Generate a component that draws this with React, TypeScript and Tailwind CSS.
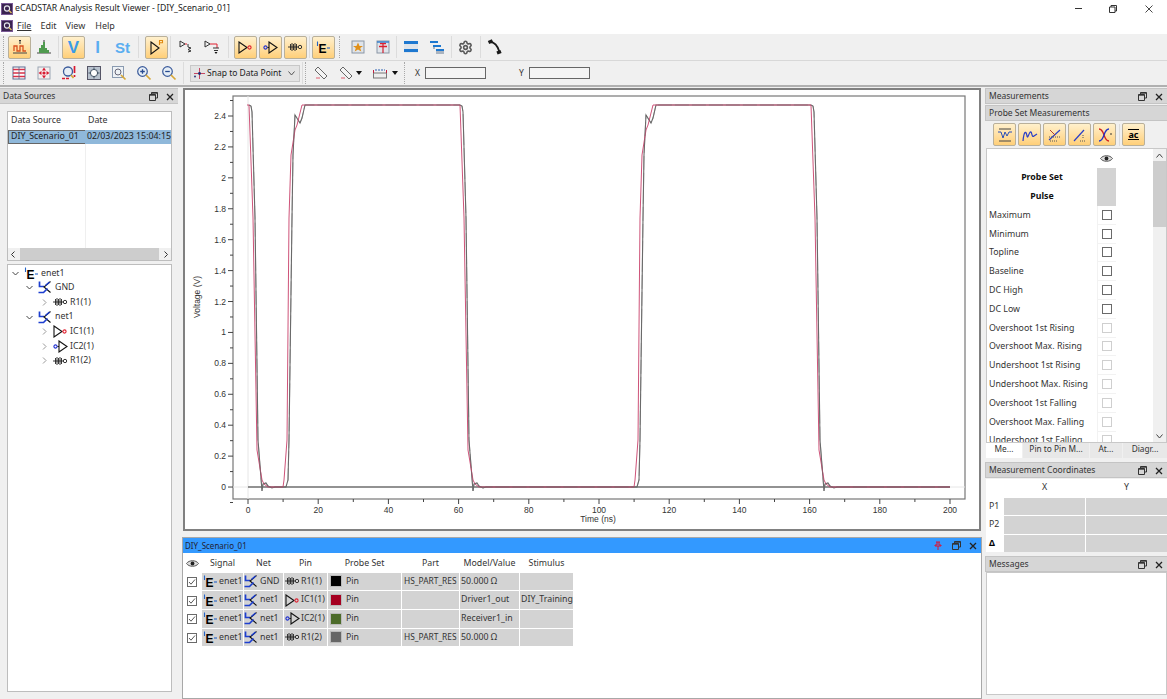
import React from "react";
import { Settings } from "lucide-react";

const F = "font-['Noto_Sans','Open_Sans',sans-serif]";

function S({ children, w = 16, h = 16, vb = "0 0 16 16" }: { children: React.ReactNode; w?: number; h?: number; vb?: string }) {
  return (
    <svg width={w} height={h} viewBox={vb} fill="none" className="shrink-0">
      {children}
    </svg>
  );
}

const EIcon = () => (
  <S w={15} h={13} vb="0 0 15 13">
    <path d="M1.5 0.5V5" stroke="#2563c8" strokeWidth="1.1" />
    <text x="2.5" y="11.5" fontSize="12" fontWeight="800" fill="#000" fontFamily="'Liberation Sans',sans-serif">E</text>
    <path d="M11 7H14" stroke="#2563c8" strokeWidth="1.1" />
  </S>
);
const NetIcon = () => (
  <S w={15} h={13} vb="0 0 15 13">
    <path d="M1.5 0.5V5.5H6" stroke="#1d3fd0" strokeWidth="1.7" />
    <path d="M12.5 0.5L6 6L12.5 11.5" stroke="#111" strokeWidth="1.1" />
    <path d="M0.5 11.5H5.5L9.5 7.5" stroke="#1d3fd0" strokeWidth="1.7" />
    <path d="M7.5 4.5L11.5 1" stroke="#1d3fd0" strokeWidth="1.5" />
  </S>
);
const ResIcon = () => (
  <S w={15} h={10} vb="0 0 15 10">
    <path d="M0 5H2M2.5 2V8M4 1V9M5.5 2V8M7 1V9M8.5 2V8M2 5H10" stroke="#222" strokeWidth="0.9" />
    <circle cx="12" cy="5" r="1.7" stroke="#333" strokeWidth="1" />
  </S>
);
const DrvIcon = () => (
  <S w={15} h={13} vb="0 0 15 13">
    <path d="M1 1L9 6.5L1 12Z" stroke="#111" strokeWidth="1.1" />
    <circle cx="11.5" cy="6.5" r="1.6" stroke="#e02030" strokeWidth="1.1" />
  </S>
);
const RcvIcon = () => (
  <S w={15} h={13} vb="0 0 15 13">
    <circle cx="2.5" cy="6.5" r="1.6" stroke="#2030d0" strokeWidth="1.1" />
    <path d="M4.5 6.5H6M6 1L14 6.5L6 12Z" stroke="#111" strokeWidth="1.1" />
  </S>
);
const Check = ({ on = false, faint = false }: { on?: boolean; faint?: boolean }) => (
  <div className={`w-[10px] h-[10px] border ${faint ? "border-[#cfcfcf]" : "border-[#6a6a6a]"} bg-white flex items-center justify-center`}>
    {on && (
      <S w={8} h={8} vb="0 0 8 8">
        <path d="M1 4L3 6.2L7 1.5" stroke="#444" strokeWidth="0.9" />
      </S>
    )}
  </div>
);
const Eye = () => (
  <S w={13} h={9} vb="0 0 13 9">
    <path d="M0.5 4.5C3 0.8 10 0.8 12.5 4.5C10 8.2 3 8.2 0.5 4.5Z" stroke="#555" fill="#ddd" />
    <circle cx="6.5" cy="4.5" r="1.9" fill="#222" />
  </S>
);
const RestoreX = ({ pin = false }: { pin?: boolean }) => (
  <div className="flex items-center">
    {pin && (
      <span className="mr-[10px]">
        <S w={8} h={9} vb="0 0 8 9">
          <path d="M2 1H6M3 1V4H1V5H7V4H5V1M4 5V9" stroke="#e01030" strokeWidth="1" />
        </S>
      </span>
    )}
    <S w={9} h={9} vb="0 0 9 9">
      <path d="M2.5 2.5V0.5H8.5V6H6.5M0.5 2.5H6.5V8.5H0.5Z" stroke="#333" strokeWidth="1" />
      <path d="M0.5 3.2H6.5M2.5 1.2H8.5" stroke="#333" strokeWidth="1" />
    </S>
    <span className="ml-[8px]">
      <S w={8} h={8} vb="0 0 8 8">
        <path d="M1 1L7 7M7 1L1 7" stroke="#222" strokeWidth="1.3" />
      </S>
    </span>
  </div>
);
const DockHead = ({ title, className = "", pin = false }: { title: string; className?: string; pin?: boolean }) => (
  <div className={`flex items-center justify-between pl-[3px] pr-[4px] pt-[1px] text-[8.5px] text-[#333] bg-[#d6d6d6] border-y border-[#c4c4c4] ${className}`}>
    <span>{title}</span>
    <RestoreX pin={pin} />
  </div>
);
const Btn = ({ children, on = false, className = "" }: { children: React.ReactNode; on?: boolean; className?: string }) => (
  <div className={`w-[23px] h-[23px] shrink-0 flex items-center justify-center rounded-[2px] ${on ? "border border-[#b9b09a] bg-gradient-to-b from-[#fff0cc] to-[#ffcf78]" : ""} ${className}`}>
    {children}
  </div>
);
const Sep = ({ className = "" }: { className?: string }) => <div className={`w-px h-[22px] bg-[#dcdcdc] shrink-0 ${className}`} />;
const Grip = ({ className = "" }: { className?: string }) => <div className={`w-px h-[22px] border-l border-dotted border-[#a8a8a8] shrink-0 ${className}`} />;
const Arrow = () => (
  <S w={6} h={4} vb="0 0 6 4">
    <path d="M0 0H6L3 4Z" fill="#111" />
  </S>
);

const Doc = ({ children }: { children: React.ReactNode }) => (
  <S>
    <rect x="2" y="2" width="12" height="12" fill="#dfe4ea" stroke="#8a96a5" />
    {children}
  </S>
);

type P = number[][];
const falls = (x: number): P =>
  [[x - 1, 105], [x + 1, 105], [x + 5, 218], [x + 9, 450], [x + 14, 480], [x + 16, 484], [x + 20, 487]];
const rises = (x: number): P =>
  [[x, 487], [x + 1, 480], [x + 4, 440], [x + 6, 218], [x + 8, 155], [x + 12, 130], [x + 14, 125], [x + 17, 113], [x + 19, 105]];
const gfalls = (x: number): P =>
  [[x + 1, 105], [x + 3, 106], [x + 4, 112], [x + 7, 218], [x + 10, 440], [x + 14, 491], [x + 15, 484], [x + 18, 483], [x + 20, 486], [x + 24, 488], [x + 27, 487]];
const grises = (x: number): P =>
  [[x + 3, 487], [x + 5, 480], [x + 6, 440], [x + 9, 218], [x + 10, 155], [x + 12, 115], [x + 17, 123], [x + 19, 118], [x + 22, 105]];
const poly = (f: (x: number) => P, r: (x: number) => P) =>
  [...f(248), ...r(283), ...f(459), ...r(634), ...f(810), [950, 487]].map((p) => p.join(",")).join(" ");

const yTicks = ["2.4", "2.2", "2", "1.8", "1.6", "1.4", "1.2", "1", "0.8", "0.6", "0.4", "0.2", "0"];
const xTicks = [0, 20, 40, 60, 80, 100, 120, 140, 160, 180, 200];

function Plot() {
  // svg coordinates are offset so the numbers read as page pixels
  const ox = 185;
  const oy = 90;
  return (
    <svg width="795" height="439" viewBox={`${ox} ${oy} 795 439`} className="block">
      <rect x="233" y="96" width="732" height="403" fill="#fff" stroke="#777" strokeWidth="1.2" />
      <path d="M248 96V499M233 487H965" stroke="#e6e6e6" />
      {yTicks.map((t, i) => {
        const y = 116 + i * 30.92;
        return (
          <g key={t}>
            <path d={`M228 ${y}H233`} stroke="#444" />
            <path d={`M230 ${y + 15.46}H233`} stroke="#444" />
            <text x="226" y={y + 3} textAnchor="end" fontSize="8.5" fill="#333" fontFamily="'Liberation Sans',sans-serif">{t}</text>
          </g>
        );
      })}
      <path d="M230 100.5H233" stroke="#444" />
      {xTicks.map((t, i) => {
        const x = 248 + i * 70.2;
        return (
          <g key={t}>
            <path d={`M${x} 499V504`} stroke="#444" />
            {i < 10 && <path d={`M${x + 35.1} 499V502`} stroke="#444" />}
            <text x={x} y="513" textAnchor="middle" fontSize="8.5" fill="#333" fontFamily="'Liberation Sans',sans-serif">{t}</text>
          </g>
        );
      })}
      <text x="598" y="522" textAnchor="middle" fontSize="8.5" fill="#333" fontFamily="'Liberation Sans',sans-serif">Time (ns)</text>
      <text transform="translate(200 297) rotate(-90)" textAnchor="middle" fontSize="8.5" fill="#333" fontFamily="'Liberation Sans',sans-serif">Voltage (V)</text>
      <path d="M248 487H950" stroke="#333" strokeWidth="1.1" />
      <polyline points={poly(gfalls, grises)} fill="none" stroke="#6a6a6a" strokeWidth="1.1" />
      <polyline points={poly(falls, rises)} fill="none" stroke="#c8406a" strokeWidth="0.9" />
      <polyline points={poly(gfalls, grises)} fill="none" stroke="#6a6a6a" strokeWidth="0.5" strokeDasharray="14 3" />
    </svg>
  );
}

const rows = [
  { net: "GND", pin: "R1(1)", icon: <ResIcon />, color: "bg-black", part: "HS_PART_RES", model: "50.000 Ω", stim: "" },
  { net: "net1", pin: "IC1(1)", icon: <DrvIcon />, color: "bg-[#a50021]", part: "", model: "Driver1_out", stim: "DIY_Training" },
  { net: "net1", pin: "IC2(1)", icon: <RcvIcon />, color: "bg-[#4c6b2a]", part: "", model: "Receiver1_in", stim: "" },
  { net: "net1", pin: "R1(2)", icon: <ResIcon />, color: "bg-[#666666]", part: "HS_PART_RES", model: "50.000 Ω", stim: "" },
];

const meas = [
  ["Maximum", 0], ["Minimum", 0], ["Topline", 0], ["Baseline", 0], ["DC High", 0], ["DC Low", 0],
  ["Overshoot 1st Rising", 1], ["Overshoot Max. Rising", 1], ["Undershoot 1st Rising", 1], ["Undershoot Max. Rising", 1],
  ["Overshoot 1st Falling", 1], ["Overshoot Max. Falling", 1], ["Undershoot 1st Falling", 1],
] as const;

const Tree = ({ ind, chev, icon, label }: { ind: string; chev: string; icon: React.ReactNode; label: string }) => (
  <div className={`h-[14.6px] flex items-center ${ind}`}>
    <span className="w-[12px] flex justify-center">
      <S w={7} h={7} vb="0 0 7 7">
        {chev === "d" ? <path d="M0.5 2L3.5 5L6.5 2" stroke="#444" /> : <path d="M2 0.5L5 3.5L2 6.5" stroke="#999" />}
      </S>
    </span>
    <span className="ml-[3px] w-[15px] flex justify-center">{icon}</span>
    <span className="ml-[2px]">{label}</span>
  </div>
);

const Logo = () => (
  <S w={12} h={12} vb="0 0 12 12">
    <rect width="12" height="12" fill="#3a2450" />
    <rect x="0.5" y="0.5" width="11" height="11" stroke="#7a5a96" />
    <circle cx="6" cy="5.5" r="2.6" stroke="#e8e8ee" strokeWidth="1.1" />
    <path d="M8 7.5L10.5 10" stroke="#e8c060" strokeWidth="1.3" />
  </S>
);

export default function App() {
  return (
    <div className={`w-[1167px] h-[699px] bg-[#f0f0f0] overflow-hidden text-[9px] text-[#333] ${F}`}>
      {/* title */}
      <div className="h-[17px] bg-white flex items-center text-[8.7px] text-[#222]">
        <span className="ml-[1px]"><Logo /></span>
        <span className="ml-[2px]">eCADSTAR Analysis Result Viewer - [DIY_Scenario_01]</span>
        <div className="ml-auto flex items-center">
          <div className="w-[7px] h-px bg-[#333] mr-[27px]" />
          <span className="mr-[28px]">
            <S w={8} h={8} vb="0 0 8 8">
              <path d="M2 2V0.5H7.5V6H6M0.5 2H6V7.5H0.5Z" stroke="#333" strokeWidth="1" />
            </S>
          </span>
          <span className="mr-[14px]">
            <S w={8} h={8} vb="0 0 8 8">
              <path d="M0.5 0.5L7.5 7.5M7.5 0.5L0.5 7.5" stroke="#333" strokeWidth="0.9" />
            </S>
          </span>
        </div>
      </div>
      {/* menu */}
      <div className="h-[17px] bg-white flex items-center">
        <span className="ml-[1px]"><Logo /></span>
        <span className="ml-[4px] underline decoration-[0.5px] underline-offset-1">File</span>
        <span className="ml-[9px]">Edit</span>
        <span className="ml-[9px]">View</span>
        <span className="ml-[10px]">Help</span>
      </div>
      {/* toolbar 1 */}
      <div className="h-[27px] flex items-center border-b border-[#d8d8d8]">
        <Grip className="ml-[3px]" />
        <Btn on className="ml-[4px]">
          <S>
            <path d="M1 14H15" stroke="#444" />
            <path d="M2 12V7H5V12H8V7H11V12H14" stroke="#d9501e" strokeWidth="1.3" />
            <path d="M7 1.5H9M8 1.5V5" stroke="#333" />
          </S>
        </Btn>
        <Btn className="ml-px">
          <S>
            <path d="M1 14H15" stroke="#444" />
            <path d="M3 14V9H5V6H7V3H9V9H11V11H13V14Z" fill="#4f9a4f" />
            <path d="M8 1V3" stroke="#333" />
          </S>
        </Btn>
        <Sep className="ml-[3px] mr-[3px]" />
        <Btn on><span className="text-[17px] font-bold text-[#3a9be8] font-['Liberation_Sans',sans-serif] leading-none">V</span></Btn>
        <Btn className="ml-px"><span className="text-[17px] font-bold text-[#5aaef0] font-['Liberation_Sans',sans-serif] leading-none">I</span></Btn>
        <Btn className="ml-[2px]"><span className="text-[15px] font-bold text-[#5aaef0] font-['Liberation_Sans',sans-serif] leading-none">St</span></Btn>
        <Sep className="ml-[4px] mr-[6px]" />
        <Btn on>
          <S>
            <path d="M2 3L10 9L2 15Z" stroke="#111" strokeWidth="1.1" />
            <path d="M10.5 6V1.5H13.5V3.8H10.5" stroke="#e08a10" strokeWidth="1.1" />
          </S>
        </Btn>
        <Sep className="ml-[2px] mr-[2px]" />
        <Btn className="ml-[2px]">
          <S>
            <path d="M1 2L6 5L1 8Z" stroke="#333" />
            <path d="M6 5H8" stroke="#e02030" />
            <path d="M9 5V8L12 9L9 10.5L12 12L9 13" stroke="#333" />
          </S>
        </Btn>
        <Btn className="ml-[2px]">
          <S>
            <path d="M1 2L6 5L1 8Z" stroke="#333" />
            <path d="M6 5H13V9" stroke="#e02030" />
            <path d="M9 9H15M10 11.5H14" stroke="#333" />
            <path d="M10.5 13H13.5L12 15Z" fill="#111" />
          </S>
        </Btn>
        <Sep className="ml-[5px] mr-[5px]" />
        <Btn on><DrvIcon /></Btn>
        <Btn on className="ml-[2px]"><RcvIcon /></Btn>
        <Btn on className="ml-[2px]"><ResIcon /></Btn>
        <Sep className="ml-[2px] mr-[2px]" />
        <Btn on><EIcon /></Btn>
        <Grip className="ml-[4px]" />
        <Btn className="ml-[6px]">
          <Doc><path d="M8 3.5L9.5 7H13L10.2 9L11.3 12.5L8 10.5L4.7 12.5L5.8 9L3 7H6.5Z" fill="#e0901a" /></Doc>
        </Btn>
        <Btn className="ml-[2px]">
          <Doc>
            <path d="M5 4.5H11M4 7.5H12" stroke="#e02030" strokeWidth="1.6" />
            <path d="M8 5V14" stroke="#d02030" strokeWidth="1.2" />
            <path d="M2 3H14" stroke="#2f7fd0" strokeWidth="1.4" />
          </Doc>
        </Btn>
        <Sep className="ml-[2px] mr-[2px]" />
        <Btn>
          <S>
            <rect x="1" y="2" width="14" height="12" fill="#dfe4ea" />
            <path d="M1 3.5H15M1 11.5H15" stroke="#1e78d0" strokeWidth="3" />
          </S>
        </Btn>
        <Btn className="ml-[3px]">
          <S>
            <path d="M1 2H9V4H1ZM4 6H12V8H4ZM7 10H15V12H7Z" fill="#1e78d0" />
            <path d="M7 12H15V15H7ZM4 8H6V10H4Z" fill="#aab4c0" />
          </S>
        </Btn>
        <Sep className="ml-[3px] mr-[2px]" />
        <Btn><Settings size={15} strokeWidth={2.6} color="#5a5a5a" /></Btn>
        <Sep className="ml-[3px] mr-[2px]" />
        <Btn>
          <S>
            <path d="M3 3C8 3 11 8 12.5 13" stroke="#1a1a1a" strokeWidth="1.8" />
            <path d="M1.5 3.5L5.5 1.8M10 14L14 12.5" stroke="#1a1a1a" strokeWidth="3.4" />
          </S>
        </Btn>
      </div>
      {/* toolbar 2 */}
      <div className="h-[26px] flex items-center border-b-2 border-[#b0b0b0]">
        <Grip className="ml-[3px]" />
        {[0, 1, 2, 3, 4, 5, 6].map((i) => (
          <Btn key={i} className={i === 0 ? "ml-[3px] mr-[2px]" : "mr-[2px]"}>
            {i === 0 && (
              <S>
                <rect x="2" y="2" width="12" height="12" fill="#fff" stroke="#5a6a90" />
                <path d="M2 4.5H14M2 8H14M2 11.5H14" stroke="#d8324a" strokeWidth="1.7" />
                <path d="M8 2V14" stroke="#5a6a90" strokeWidth="0.8" />
              </S>
            )}
            {i === 1 && (
              <S>
                <rect x="2" y="2" width="12" height="12" fill="#f5eeee" stroke="#9aa6b4" />
                <circle cx="8" cy="8" r="1.6" fill="#d81830" />
                <path d="M8 2.5L10 5.5H6ZM8 13.5L10 10.5H6ZM2.5 8L5.5 6V10ZM13.5 8L10.5 6V10Z" fill="#d81830" />
              </S>
            )}
            {i === 2 && (
              <S>
                <circle cx="7" cy="6.5" r="4.5" fill="#e6eef6" stroke="#3a5a9a" strokeWidth="1.3" />
                <path d="M1 13.5H9" stroke="#d81830" strokeWidth="1.7" strokeDasharray="3 1" />
                <path d="M13.5 1V8M13.5 10V12" stroke="#d81830" strokeWidth="1.7" />
                <path d="M10 10L12.5 13" stroke="#d8a838" strokeWidth="1.7" />
              </S>
            )}
            {i === 3 && (
              <S>
                <rect x="1.5" y="1.5" width="13" height="13" fill="#b8c2ce" stroke="#556" />
                <circle cx="8" cy="8" r="3.6" fill="#fff" stroke="#456" />
                <path d="M8 2.5V5M8 11V13.5M2.5 8H5M11 8H13.5" stroke="#456" />
              </S>
            )}
            {i === 4 && (
              <S>
                <rect x="1.5" y="1.5" width="11" height="11" fill="#eef2f6" stroke="#8a9ab0" />
                <circle cx="7" cy="7" r="3" stroke="#667" />
                <path d="M10 10L14.5 14.5" stroke="#d8a838" strokeWidth="1.7" />
              </S>
            )}
            {(i === 5 || i === 6) && (
              <S>
                <circle cx="6.5" cy="6.5" r="4.8" fill="#e6eef6" stroke="#3a5a9a" strokeWidth="1.2" />
                <path d={i === 5 ? "M4.2 6.5H8.8M6.5 4.2V8.8" : "M4.2 6.5H8.8"} stroke="#274a90" strokeWidth="1.3" />
                <path d="M10 10L14.5 14.5" stroke="#d8a838" strokeWidth="1.7" />
              </S>
            )}
          </Btn>
        ))}
        <Sep className="ml-[1px] mr-[6px]" />
        <div className="w-[110px] h-[17px] bg-[#e4e4e4] border border-[#c8c8c8] flex items-center text-[8.5px] text-[#222]">
          <span className="ml-[2px]">
            <S w={13} h={13} vb="0 0 13 13">
              <path d="M6.5 1V12M1 6.5H12" stroke="#c02040" strokeWidth="0.8" />
              <circle cx="6.5" cy="6.5" r="1.4" fill="#1d2a70" />
              <circle cx="2" cy="9.5" r="0.9" fill="#1d2a70" />
            </S>
          </span>
          <span className="ml-[1px]">Snap to Data Point</span>
          <span className="ml-auto mr-[4px]">
            <S w={7} h={5} vb="0 0 7 5"><path d="M0.5 0.5L3.5 4L6.5 0.5" stroke="#555" /></S>
          </span>
        </div>
        <Sep className="ml-[2px]" />
        <Grip className="ml-[2px]" />
        <Btn className="ml-[3px]">
          <S><path d="M2 5L5 2L14 11L11 14Z" fill="#f4f4f4" stroke="#666" /><path d="M3 13H7" stroke="#e06070" /></S>
        </Btn>
        <Btn className="ml-[2px]">
          <S><path d="M2 5L5 2L14 11L11 14Z" fill="#f4f4f4" stroke="#666" /><path d="M3 13H7" stroke="#e06070" /></S>
        </Btn>
        <span className="ml-[-1px]"><Arrow /></span>
        <Btn className="ml-[6px]">
          <S>
            <path d="M3 5H13" stroke="#2a5fb0" strokeDasharray="2 1" />
            <rect x="1.5" y="8" width="13" height="5" fill="#eee" stroke="#777" />
            <path d="M1.5 5V8M14.5 5V8" stroke="#c02040" />
          </S>
        </Btn>
        <span className="ml-[1px]"><Arrow /></span>
        <Grip className="ml-[6px]" />
        <span className="ml-[10px] text-[8.5px]">X</span>
        <div className="ml-[5px] w-[61px] h-[12px] bg-[#f4f4f4] border border-[#666]" />
        <span className="ml-[33px] text-[8.5px]">Y</span>
        <div className="ml-[5px] w-[61px] h-[12px] bg-[#f4f4f4] border border-[#666]" />
      </div>
      {/* body */}
      <div className="flex h-[612px]">
        {/* left */}
        <div className="w-[178px] shrink-0 flex flex-col">
          <DockHead title="Data Sources" className="h-[16px] mt-[1px]" />
          <div className="mt-[7px] mx-[7px] w-[165px] h-[150px] bg-white border border-[#bdbdbd] flex flex-col shrink-0 text-[8.8px]">
            <div className="h-[18px] flex items-center">
              <span className="w-[78px] pl-[3px]">Data Source</span>
              <span className="pl-[2px]">Date</span>
            </div>
            <div className="h-[14px] bg-[#8fb8da] flex items-center text-[#222]">
              <span className="w-[78px] h-full flex items-center pl-[2px] border-y border-l border-[#666]">DIY_Scenario_01</span>
              <span className="pl-[2px] whitespace-nowrap">02/03/2023 15:04:15</span>
            </div>
            <div className="flex-1 flex">
              <div className="w-[78px] border-r border-[#efefef]" />
            </div>
            <div className="h-[12px] bg-[#f0f0f0] flex items-center justify-between px-[2px]">
              <S w={6} h={7} vb="0 0 6 7"><path d="M4.5 0.5L1.5 3.5L4.5 6.5" stroke="#333" /></S>
              <div className="flex-1 h-full bg-[#cdcdcd] mx-[4px]" />
              <S w={6} h={7} vb="0 0 6 7"><path d="M1.5 0.5L4.5 3.5L1.5 6.5" stroke="#333" /></S>
            </div>
          </div>
          <div className="mt-[3px] mx-[7px] w-[165px] h-[428px] bg-white border border-[#bdbdbd] pt-[1px] text-[8.8px] shrink-0">
            <Tree ind="pl-[1px]" chev="d" icon={<EIcon />} label="enet1" />
            <Tree ind="pl-[15px]" chev="d" icon={<NetIcon />} label="GND" />
            <Tree ind="pl-[30px]" chev="r" icon={<ResIcon />} label="R1(1)" />
            <Tree ind="pl-[15px]" chev="d" icon={<NetIcon />} label="net1" />
            <Tree ind="pl-[30px]" chev="r" icon={<DrvIcon />} label="IC1(1)" />
            <Tree ind="pl-[30px]" chev="r" icon={<RcvIcon />} label="IC2(1)" />
            <Tree ind="pl-[30px]" chev="r" icon={<ResIcon />} label="R1(2)" />
          </div>
        </div>
        {/* center */}
        <div className="w-[800px] ml-[4px] shrink-0 flex flex-col">
          <div className="mt-[1px] mx-[1px] h-[443px] border-2 border-[#808080] bg-white shrink-0">
            <Plot />
          </div>
          <div className="mt-[6px] flex-1 bg-white border border-[#a8a8a8] flex flex-col">
            <div className="h-[15px] bg-[#3399ff] flex items-center justify-between pl-[2px] pr-[4px] text-[8px] text-[#223]">
              <span>DIY_Scenario_01</span>
              <RestoreX pin />
            </div>
            <div className="text-[8.8px] w-[392px]">
              <div className="grid grid-cols-[18px_41px_39px_43px_73px_57px_59px_53px] gap-x-px h-[19.5px] pt-[1px] items-center text-center">
                <span className="flex justify-center"><Eye /></span>
                <span>Signal</span><span>Net</span><span>Pin</span><span>Probe Set</span><span>Part</span><span>Model/Value</span><span>Stimulus</span>
              </div>
              {rows.map((r, i) => (
                <div key={i} className="grid grid-cols-[18px_41px_39px_43px_73px_57px_59px_53px] gap-x-px h-[18.7px] items-stretch">
                  <span className="flex items-center justify-center"><Check on /></span>
                  <span className="bg-[#d3d3d3] mb-px flex items-center pl-[1px] gap-[1px]"><EIcon /><span>enet1</span></span>
                  <span className="bg-[#d3d3d3] mb-px flex items-center gap-[1px]"><NetIcon /><span>{r.net}</span></span>
                  <span className="bg-[#d3d3d3] mb-px flex items-center pl-[1px] gap-[1px] whitespace-nowrap">{r.icon}<span>{r.pin}</span></span>
                  <span className="bg-[#d3d3d3] mb-px flex items-center pl-[2px]">
                    <span className={`w-[12px] h-[12px] border border-[#bbb] ${r.color}`} />
                    <span className="ml-[4px]">Pin</span>
                  </span>
                  <span className="bg-[#d3d3d3] mb-px flex items-center pl-[2px] whitespace-nowrap text-[8.4px]">{r.part}</span>
                  <span className="bg-[#d3d3d3] mb-px flex items-center pl-[1px] whitespace-nowrap">{r.model}</span>
                  <span className="bg-[#d3d3d3] mb-px flex items-center pl-[1px] whitespace-nowrap">{r.stim}</span>
                </div>
              ))}
            </div>
          </div>
        </div>
        {/* right */}
        <div className="ml-[3px] flex-1 flex flex-col min-w-0">
          <DockHead title="Measurements" className="h-[16px] mt-[1px] border-l shrink-0" />
          <div className="mt-[1px] h-[16px] flex items-center pl-[3px] text-[8.5px] bg-[#d6d6d6] border-y border-[#c4c4c4] border-l shrink-0">Probe Set Measurements</div>
          <div className="h-[27px] flex items-center pl-[8px] gap-[2px] shrink-0">
            <Btn on><S><path d="M2 14H14M2 2H14" stroke="#444" /><path d="M1 5H4L6 11L8 5L10 9L12 5H15" stroke="#2a4fb8" /></S></Btn>
            <Btn on><S><path d="M1 14C2 4 4 3 5 9C6 13 7 4 9 5C10 6 10 11 12 9L15 7" stroke="#2a3fc8" strokeWidth="1.2" /></S></Btn>
            <Btn on><S><path d="M2 13L13 3" stroke="#2a3fc8" strokeWidth="1.2" /><path d="M2 10H14M3 14H11" stroke="#555" strokeDasharray="1 1" /><path d="M3 3L8 8" stroke="#b04030" /></S></Btn>
            <Btn on><S><path d="M2 14L12 3" stroke="#2a3fc8" strokeWidth="1.2" /><path d="M8 14H14M11 8V12" stroke="#555" strokeDasharray="1 1" /></S></Btn>
            <Btn on><S><path d="M2 2C8 2 6 14 12 14" stroke="#d02020" strokeWidth="1.3" /><path d="M2 14C8 14 6 2 12 2" stroke="#2030c8" strokeWidth="1.3" /><path d="M13 7H15" stroke="#333" /></S></Btn>
            <Sep className="ml-[1px]" />
            <Btn on><span className="text-[9px] font-bold text-black leading-none border-y border-black">ac</span></Btn>
          </div>
          <div className="h-[295px] bg-white border border-[#c8c8c8] flex overflow-hidden shrink-0 text-[8.8px] ml-[1px]">
            <div className="flex-1 min-w-0 flex flex-col overflow-hidden">
              <div className="w-[130px] h-[18.8px] flex items-stretch shrink-0">
                <div className="w-[110px]" />
                <div className="w-[19px] flex items-center justify-center"><Eye /></div>
              </div>
              <div className="w-[130px] h-[19.4px] flex items-stretch shrink-0">
                <div className="w-[110px] flex items-center justify-center font-bold text-[#111]">Probe Set</div>
                <div className="w-[19px] bg-[#d3d3d3]" />
              </div>
              <div className="w-[130px] h-[18.8px] flex items-stretch shrink-0">
                <div className="w-[110px] flex items-center justify-center font-bold text-[#111]">Pulse</div>
                <div className="w-[19px] bg-[#d3d3d3]" />
              </div>
              {meas.map(([m, f]) => (
                <div key={m} className="w-[130px] h-[18.8px] flex items-stretch shrink-0">
                  <div className="w-[110px] flex items-center pl-[2px] whitespace-nowrap">{m}</div>
                  <div className="w-[19px] flex items-center justify-center border-l border-b border-[#f2f2f2]"><Check faint={!!f} /></div>
                </div>
              ))}
            </div>
            <div className="w-[13px] bg-[#f0f0f0] flex flex-col items-center shrink-0">
              <span className="h-[12px] flex items-center"><S w={7} h={5} vb="0 0 7 5"><path d="M0.5 4.5L3.5 1L6.5 4.5" stroke="#444" /></S></span>
              <div className="w-full h-[66px] bg-[#cdcdcd]" />
              <span className="mt-auto h-[12px] flex items-center"><S w={7} h={5} vb="0 0 7 5"><path d="M0.5 0.5L3.5 4L6.5 0.5" stroke="#444" /></S></span>
            </div>
          </div>
          <div className="h-[15px] flex text-[8.3px] text-center ml-[1px] shrink-0">
            <span className="w-[36px] bg-white">Me...</span>
            <span className="w-[66px] bg-[#e8e8e8] ml-px">Pin to Pin M...</span>
            <span className="w-[32px] bg-[#e8e8e8] ml-px">At...</span>
            <span className="flex-1 bg-[#e8e8e8] ml-px">Diagr...</span>
          </div>
          <DockHead title="Measurement Coordinates" className="h-[16px] mt-[4px] border-l shrink-0" />
          <div className="h-[73px] mt-[1px] bg-white ml-[1px] grid grid-cols-[17px_1fr_1fr] grid-rows-[18px_1fr_1fr_1fr] gap-px shrink-0 text-[8.8px]">
            <span />
            <span className="flex items-center justify-center">X</span>
            <span className="flex items-center justify-center">Y</span>
            <span className="flex items-center pl-[3px]">P1</span>
            <span className="bg-[#d3d3d3]" /><span className="bg-[#d3d3d3]" />
            <span className="flex items-center pl-[3px]">P2</span>
            <span className="bg-[#d3d3d3]" /><span className="bg-[#d3d3d3]" />
            <span className="flex items-center pl-[3px] font-bold text-black">Δ</span>
            <span className="bg-[#d3d3d3]" /><span className="bg-[#d3d3d3]" />
          </div>
          <DockHead title="Messages" className="h-[16px] mt-[4px] border-l shrink-0" />
          <div className="h-[123px] bg-white border border-[#c8c8c8] ml-[1px] shrink-0" />
        </div>
      </div>
    </div>
  );
}
